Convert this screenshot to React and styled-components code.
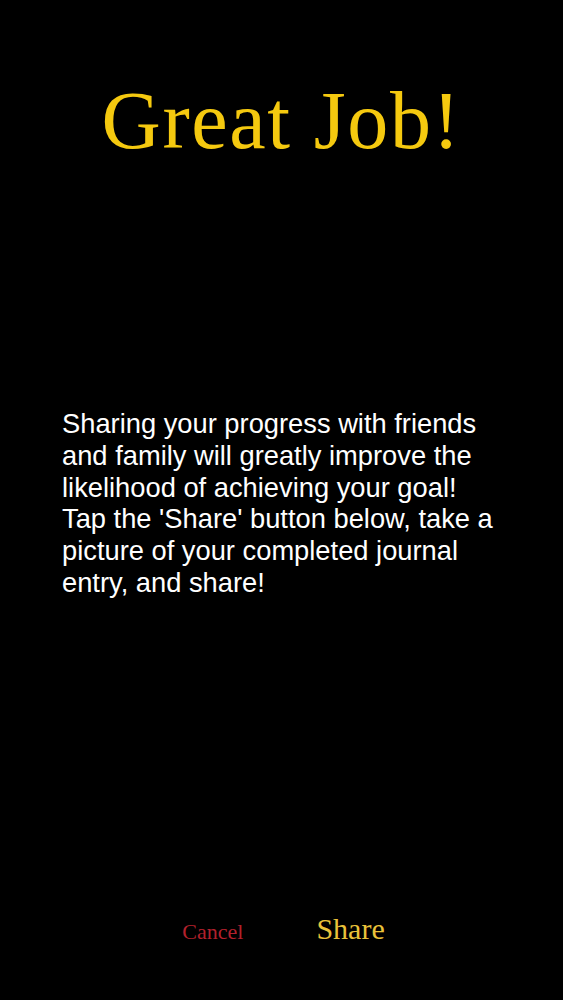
import React from "react";
import styled, { createGlobalStyle } from "styled-components";

const Global = createGlobalStyle`
  html, body { margin: 0; padding: 0; background: #000; }
  #root { min-height: 1000px; }
`;

const Screen = styled.div`
  width: 563px;
  height: 1000px;
  background: #000;
  display: flex;
  flex-direction: column;
  align-items: center;
  box-sizing: border-box;
`;

const Title = styled.h1`
  margin: 76px 0 0 0;
  font-family: "Liberation Serif", "DejaVu Serif", serif;
  font-weight: normal;
  font-size: 82px;
  line-height: 90px;
  color: #f5c90f;
  letter-spacing: 1.6px;
`;

const Message = styled.p`
  margin: 242px 0 0 0;
  align-self: flex-start;
  padding-left: 62px;
  padding-right: 20px;
  font-family: "Liberation Sans", Arial, sans-serif;
  font-size: 27.3px;
  line-height: 31.8px;
  color: #fff;
`;

const Footer = styled.div`
  margin-top: auto;
  margin-bottom: 54px;
  display: flex;
  align-items: baseline;
  gap: 73px;
  padding-left: 4px;
`;

const Action = styled.button`
  background: none;
  border: none;
  padding: 0;
  font-family: "Liberation Serif", "DejaVu Serif", serif;
  font-size: ${(p) => p.$size}px;
  color: ${(p) => p.$color};
  cursor: pointer;
`;

export default function App() {
  return (
    <Screen>
      <Global />
      <Title>Great Job!</Title>
      <Message>
        Sharing your progress with friends
        <br />
        and family will greatly improve the
        <br />
        likelihood of achieving your goal!
        <br />
        Tap the 'Share' button below, take a
        <br />
        picture of your completed journal
        <br />
        entry, and share!
      </Message>
      <Footer>
        <Action $size={22} $color="#b3202c">Cancel</Action>
        <Action $size={30} $color="#e9c23a">Share</Action>
      </Footer>
    </Screen>
  );
}
